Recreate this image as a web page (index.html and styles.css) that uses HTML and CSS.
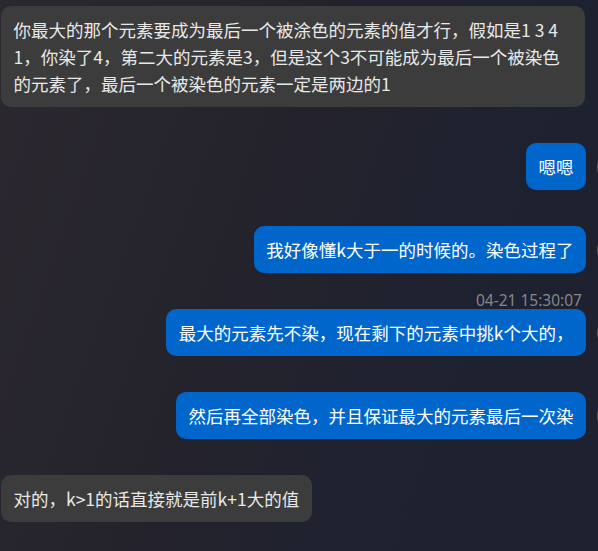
FILE: index.html
```html
<!DOCTYPE html>
<html lang="zh-CN">
<head>
<meta charset="utf-8">
<link rel="stylesheet" href="styles.css">
</head>
<body>
<div class="chat">
  <div class="msg left">
    <div class="avatar"></div>
    <div class="bubble gray">你最大的那个元素要成为最后一个被涂色的元素的值才行，假如是1 3 4 1，你染了4，第二大的元素是3，但是这个3不可能成为最后一个被染色的元素了，最后一个被染色的元素一定是两边的1</div>
  </div>
  <div class="msg right">
    <div class="bubble blue">嗯嗯</div>
    <div class="avatar"></div>
  </div>
  <div class="msg right">
    <div class="bubble blue">我好像懂k大于一的时候的。染色过程了</div>
    <div class="avatar"></div>
  </div>
  <div class="msg right">
    <div class="bubble blue"><span class="time">04-21 15:30:07</span>最大的元素先不染，现在剩下的元素中挑k个大的，</div>
    <div class="avatar"></div>
  </div>
  <div class="msg right">
    <div class="bubble blue">然后再全部染色，并且保证最大的元素最后一次染</div>
    <div class="avatar"></div>
  </div>
  <div class="msg left">
    <div class="avatar"></div>
    <div class="bubble gray">对的，k&gt;1的话直接就是前k+1大的值</div>
  </div>
</div>
</body>
</html>
```
FILE: styles.css
```css
html, body {
  margin: 0;
  padding: 0;
  height: 100%;
}
body {
  overflow: hidden;
  background: linear-gradient(110deg, #2c2830 0%, #24232c 40%, #1e2130 75%, #1d2130 100%);
  font-family: "Microsoft YaHei", "Noto Sans CJK SC", "Noto Sans", sans-serif;
  font-size: 17.5px;
}
.chat {
  display: flex;
  flex-direction: column;
  gap: 36px;
  padding-top: 6px;
  margin-left: -42px;
  width: 671px;
}
.msg {
  display: flex;
  align-items: center;
  gap: 11px;
}
.msg.right {
  justify-content: flex-end;
}
.avatar {
  flex: 0 0 32px;
  width: 32px;
  height: 32px;
  border-radius: 50%;
  background: radial-gradient(circle at 40% 40%, #6a6a6a, #4a4a4a);
}
.bubble {
  position: relative;
  padding: 10px 12.5px;
  line-height: 27px;
  border-radius: 10px;
  max-width: 559px;
}
.gray {
  background: #3c3c3c;
  color: #e8e8e8;
}
.blue {
  background: #0066cc;
  color: #ffffff;
}
.time {
  position: absolute;
  right: 4px;
  bottom: 100%;
  margin-bottom: -1px;
  font-family: "Noto Sans", "Open Sans", sans-serif;
  font-size: 15.5px;
  line-height: 19px;
  color: #878787;
  white-space: nowrap;
}
```
